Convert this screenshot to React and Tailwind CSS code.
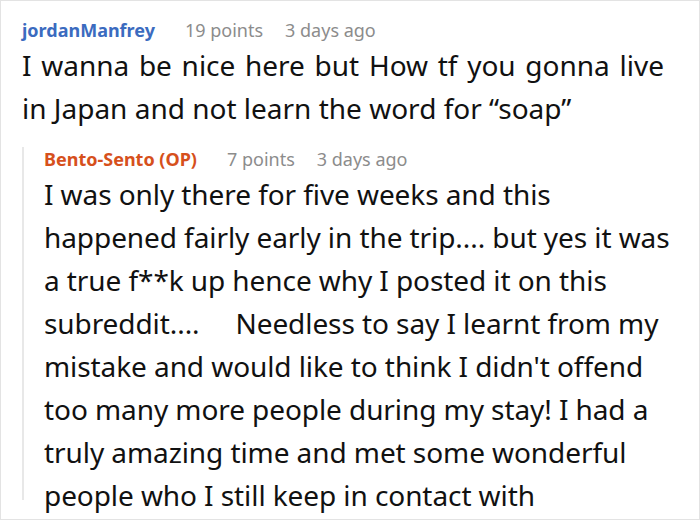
import React from 'react';

const font = { fontFamily: '"Noto Sans", "Open Sans", sans-serif' };

const Meta = ({ name, nameClass, points, time, className = '' }) => (
  <div className={`flex items-baseline text-[18px] leading-[24px] ${className}`}>
    <span className={`font-bold ${nameClass}`}>{name}</span>
    <span className="ml-[30px] text-[#8c8c8c]">{points}</span>
    <span className="ml-[22px] text-[#8c8c8c]">{time}</span>
  </div>
);

const replyLines = [
  'I was only there for five weeks and this',
  'happened fairly early in the trip.... but yes it was',
  'a true f**k up hence why I posted it on this',
  'subreddit....     Needless to say I learnt from my',
  "mistake and would like to think I didn't offend",
  'too many more people during my stay! I had a',
  'truly amazing time and met some wonderful',
  'people who I still keep in contact with',
];

export default function App() {
  return (
    <div className="w-[700px] h-[520px] bg-white" style={font}>
      <div className="w-full h-full border border-[#e3e3e3] pl-[21px] pt-[17px] overflow-hidden">
        <Meta name="jordanManfrey" nameClass="text-[#3b6bbf]" points="19 points" time="3 days ago" />
        <div className="mt-[2px] text-[28px] leading-[43px] text-[#111] whitespace-pre">
          <div className="[word-spacing:2.4px]">I wanna be nice here but How tf you gonna live</div>
          <div>in Japan and not learn the word for “soap”</div>
        </div>
        {/* reply thread */}
        <div className="mt-[27px] border-l-2 border-[#e8e8e8] pl-[20px] h-[353px]">
          <Meta
            className="-mt-[10px]"
            name="Bento-Sento (OP)"
            nameClass="text-[#d6501c]"
            points="7 points"
            time="3 days ago"
          />
          <div className="mt-[2px] text-[28px] leading-[43px] tracking-[-0.08px] text-[#111] whitespace-pre">
            {replyLines.map((l) => (
              <div key={l}>{l}</div>
            ))}
          </div>
        </div>
      </div>
    </div>
  );
}
